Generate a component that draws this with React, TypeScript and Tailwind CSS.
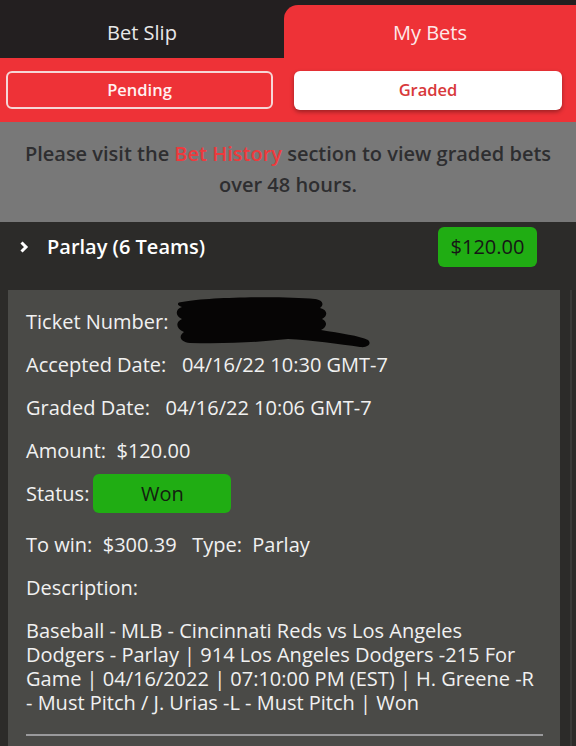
import React from "react";

const Row = ({ children, className = "" }: { children: React.ReactNode; className?: string }) => (
  <div className={"flex h-[43px] items-center " + className}>{children}</div>
);

export default function App() {
  return (
    <div className="w-[576px] h-[746px] overflow-hidden bg-[#2c2b29] font-['Open_Sans',sans-serif] text-[#f1f1f1]">
      {/* Tabs */}
      <div className="flex h-[58px] bg-[#231f20]">
        <div className="flex w-[284px] items-center justify-center pt-[8px] text-[20px] text-[#e8e8e8]">Bet Slip</div>
        <div className="mt-[5px] flex flex-1 items-center justify-center rounded-tl-[14px] bg-[#ee3237] pt-[3px] text-[20px] text-[#fde9e9]">
          My Bets
        </div>
      </div>
      {/* Sub tabs */}
      <div className="flex h-[64px] gap-[21px] bg-[#ee3237] pl-[6px] pr-[14px] pt-[13px]">
        <div className="flex h-[38px] w-[267px] items-center justify-center rounded-[6px] border-2 border-[#f6d6d6] text-[16.5px] font-semibold text-[#fff1f1]">
          Pending
        </div>
        <div className="flex h-[39px] flex-1 items-center justify-center rounded-[6px] bg-white text-[16.5px] font-semibold text-[#d8393b] shadow-[0_2px_4px_rgba(0,0,0,0.35)]">
          Graded
        </div>
      </div>
      {/* Info */}
      <div className="h-[100px] bg-[#787878] pt-[16px] text-center text-[20px] font-semibold leading-[31px] text-[#2e2e30]">
        Please visit the <span className="text-[#ee3a3d]">Bet History</span> section to view graded bets
        <br />
        over 48 hours.
      </div>
      {/* Header */}
      <div className="flex h-[68px] items-start bg-[#2c2b29] pl-[19px] pr-[39px] pt-[5px]">
        <div className="flex h-[40px] items-center">
          <svg width="10" height="14" viewBox="0 0 10 14" className="mr-[18px]">
            <path d="M2.5 2.5 L7 7 L2.5 11.5" stroke="#ffffff" strokeWidth="3" fill="none" />
          </svg>
        </div>
        <div className="flex h-[40px] flex-1 items-center text-[20px] font-semibold text-white">Parlay (6 Teams)</div>
        <div className="flex h-[40px] w-[99px] items-center justify-center rounded-[6px] bg-[#20ad13] text-[20px] text-[#161616]">
          $120.00
        </div>
      </div>
      {/* Card */}
      <div className="relative flex">
        <div className="ml-[8px] h-[456px] w-[552px] bg-[#4a4a47] pl-[18px] pt-[10px] text-[20px]">
          <Row>
            Ticket Number:
            <svg className="absolute left-[170px] top-[4px]" width="205" height="54" viewBox="0 0 205 54">
              <path
                d="M12 8 C40 3 110 2 145 5 C152 6 155 10 150 14 C158 16 158 22 152 25 C158 28 157 33 151 36 C170 39 190 42 198 46 C202 50 198 54 190 53 C170 50 140 46 118 45 C90 48 60 50 20 49 C10 48 8 42 14 38 C6 35 5 28 12 25 C5 22 5 15 12 13 C6 11 7 8 12 8 Z"
                fill="#060505"
              />
            </svg>
          </Row>
          <Row>Accepted Date:&nbsp;&nbsp; 04/16/22 10:30 GMT-7</Row>
          <Row>Graded Date:&nbsp;&nbsp; 04/16/22 10:06 GMT-7</Row>
          <Row>Amount:&nbsp; $120.00</Row>
          <Row>
            Status:
            <div className="ml-[4px] flex h-[39px] w-[138px] items-center justify-center rounded-[6px] bg-[#20ad13] text-[#132010]">
              Won
            </div>
          </Row>
          <Row className="mt-[8px]">To win:&nbsp; $300.39&nbsp;&nbsp; Type:&nbsp; Parlay</Row>
          <Row>Description:</Row>
          <div className="mt-[10px] w-[514px] leading-[24px]">
            Baseball - MLB - Cincinnati Reds vs Los Angeles Dodgers - Parlay | 914 Los Angeles Dodgers -215 For Game |
            04/16/2022 | 07:10:00 PM (EST) | H. Greene -R - Must Pitch / J. Urias -L - Must Pitch | Won
          </div>
          <div className="mt-[19px] h-[2px] w-[517px] bg-[#9a9a9c]" />
        </div>
        <div className="ml-[10px] h-[456px] w-[2px] bg-[#3a3a38]" />
      </div>
    </div>
  );
}
